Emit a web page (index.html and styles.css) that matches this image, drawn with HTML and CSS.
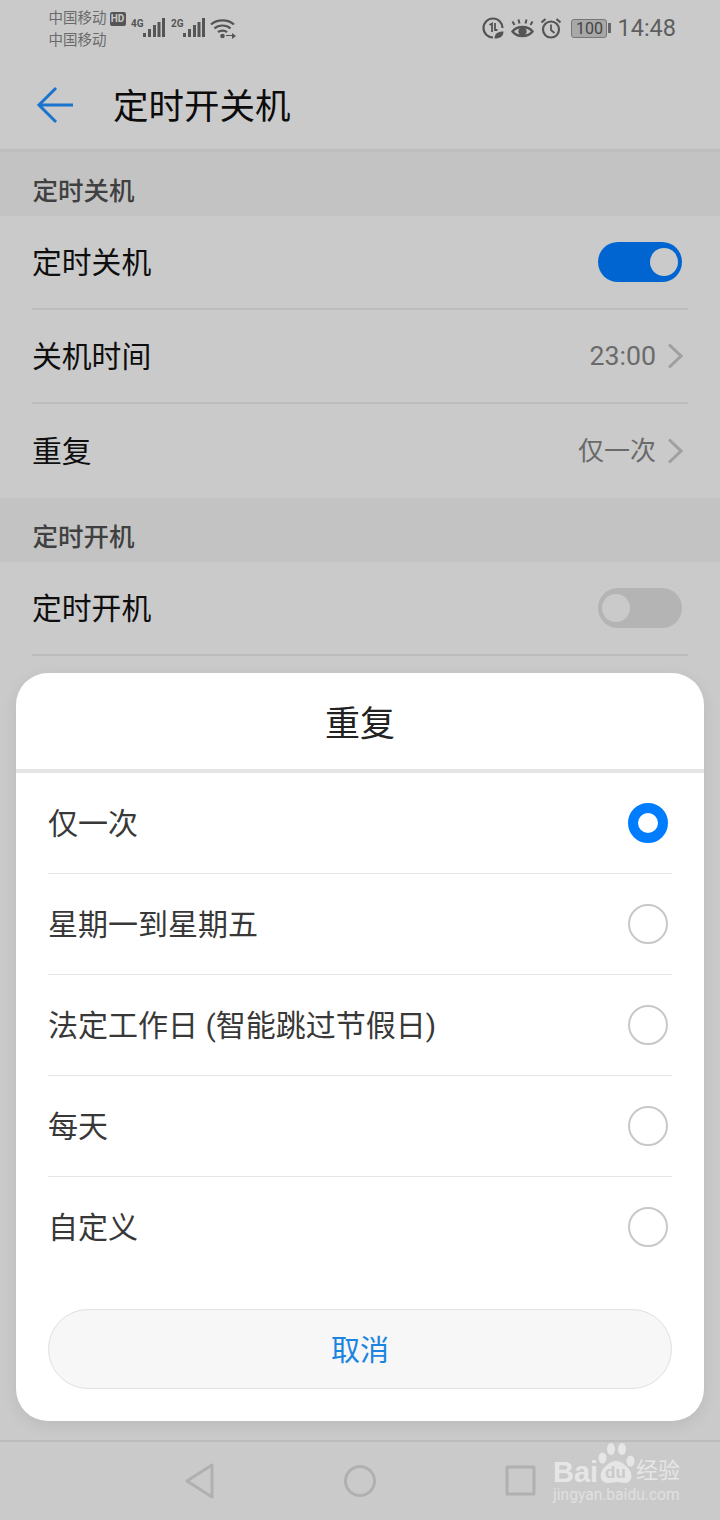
FILE: index.html
```html
<!DOCTYPE html>
<html lang="zh-CN">
<head>
    <meta charset="UTF-8">
    <meta name="viewport" content="width=device-width, initial-scale=1.0">
    <title>定时开关机</title>
    <link rel="stylesheet" href="styles.css">
</head>
<body>
<div class="screen">
    <div class="status-bar">
        <div class="carriers">
            <div class="carrier-line">中国移动<span class="hd">HD</span></div>
            <div class="carrier-line">中国移动</div>
        </div>
        <div class="signal">
            <span class="net">4G</span>
            <svg width="22" height="20" viewBox="0 0 22 20"><g fill="#555"><rect x="0" y="15" width="3" height="4"/><rect x="5" y="11" width="3" height="8"/><rect x="10" y="7" width="3" height="12"/><rect x="14.500" y="4" width="3" height="15"/><rect x="19" y="0" width="3" height="19"/></g></svg>
        </div>
        <div class="signal">
            <span class="net">2G</span>
            <svg width="22" height="20" viewBox="0 0 22 20"><g fill="#555"><rect x="0" y="15" width="3" height="4"/><rect x="5" y="11" width="3" height="8"/><rect x="10" y="7" width="3" height="12"/><rect x="14.500" y="4" width="3" height="15"/><rect x="19" y="0" width="3" height="19"/></g></svg>
        </div>
        <svg class="wifi" width="26" height="21" viewBox="0 0 26 21" fill="none" stroke="#555" stroke-width="2.200">
            <path d="M1 6.500C7 1 18 1 24 6.500"/>
            <path d="M4.500 10.500C8.500 6.500 16.500 6.500 20.500 10.500"/>
            <path d="M8 14.200C10.500 12 14.500 12 17 14.200"/>
            <circle cx="12.500" cy="18" r="2.300" fill="#555" stroke="none"/>
            <path d="M16 17.500h6" stroke-width="1"/>
            <path d="M22 15l4 3-4 3z" fill="#555" stroke="none"/>
        </svg>
        <div class="status-right">
            <svg width="22" height="22" viewBox="0 0 22 22" fill="none" stroke="#555" stroke-width="2.200">
                <path d="M11 20.500A9.500 9.500 0 1 1 20.500 11"/>
                <path d="M7.500 8l2.500-1.500V15" stroke-width="1.800"/>
                <path d="M13 6v7h2.500" stroke-width="1.800"/>
                <path d="M12.500 21.500c0-4.500 3-7 9-7 0 4.500-3 7-9 7z" fill="#555" stroke="none"/>
            </svg>
            <svg width="23" height="21" viewBox="0 0 23 21" fill="none" stroke="#555" stroke-width="2.400">
                <path d="M1.500 13.500C6 7.500 17 7.500 21.500 13.500 17 19.500 6 19.500 1.500 13.500z"/>
                <circle cx="11.500" cy="13.500" r="4.200" fill="#555" stroke="none"/>
                <path d="M3.500 7L1.500 3.500M8.500 5.500L7.500 1.500M14.500 5.500L15.500 1.500M19.500 7L21.500 3.500" stroke-width="2"/>
            </svg>
            <svg class="alarm" width="22" height="22" viewBox="0 0 22 22" fill="none" stroke="#555" stroke-width="2.200">
                <circle cx="11" cy="12.500" r="8"/>
                <path d="M11 7.500v5.500l3.500 3" stroke-width="1.800"/>
                <path d="M1.500 5.500L5.500 2M20.500 5.500L16.500 2"/>
            </svg>
            <div class="battery">
                <div class="battery-body">100</div>
                <div class="battery-nub"></div>
            </div>
            <span class="clock">14:48</span>
        </div>
    </div>

    <div class="title-bar">
        <svg class="back" width="38" height="38" viewBox="0 0 38 38" fill="none" stroke="#1a73cc" stroke-width="3">
            <path d="M37 19H3"/>
            <path d="M20 2L3 19l17 17"/>
        </svg>
        <h1 class="page-title">定时开关机</h1>
    </div>

    <div class="content">
        <div class="section-head">定时关机</div>
        <div class="row">
            <span class="row-label">定时关机</span>
            <div class="switch switch-on"><div class="knob"></div></div>
        </div>
        <div class="row">
            <span class="row-label">关机时间</span>
            <span class="row-value">23:00</span>
            <svg class="chevron" width="16" height="26" viewBox="0 0 16 26" fill="none" stroke="#a0a0a0" stroke-width="3"><path d="M2 1.500L14 13 2 24.500"/></svg>
        </div>
        <div class="row row-last">
            <span class="row-label">重复</span>
            <span class="row-value row-value-cn">仅一次</span>
            <svg class="chevron" width="16" height="26" viewBox="0 0 16 26" fill="none" stroke="#a0a0a0" stroke-width="3"><path d="M2 1.500L14 13 2 24.500"/></svg>
        </div>
        <div class="section-head">定时开机</div>
        <div class="row">
            <span class="row-label">定时开机</span>
            <div class="switch"><div class="knob"></div></div>
        </div>
    </div>

    <div class="nav-bar">
        <svg width="32" height="36" viewBox="0 0 32 36" fill="none" stroke="#b0b0b0" stroke-width="3" stroke-linejoin="round"><path d="M28 2V34L3 18z"/></svg>
        <svg width="32" height="36" viewBox="0 0 32 36" fill="none" stroke="#b0b0b0" stroke-width="3"><circle cx="16" cy="18" r="14.500"/></svg>
        <svg width="32" height="36" viewBox="0 0 32 36" fill="none" stroke="#b0b0b0" stroke-width="3" stroke-linejoin="round"><rect x="3" y="4" width="27" height="27"/></svg>
    </div>

    <div class="sheet">
        <div class="sheet-title">重复</div>
        <div class="option"><span class="option-text">仅一次</span><div class="radio radio-on"></div></div>
        <div class="option"><span class="option-text">星期一到星期五</span><div class="radio"></div></div>
        <div class="option"><span class="option-text">法定工作日 (智能跳过节假日)</span><div class="radio"></div></div>
        <div class="option"><span class="option-text">每天</span><div class="radio"></div></div>
        <div class="option option-last"><span class="option-text">自定义</span><div class="radio"></div></div>
        <div class="cancel">取消</div>
    </div>

    <div class="watermark">
        <svg class="paw" width="40" height="44" viewBox="0 0 40 44" fill="#e6e6e6">
            <ellipse cx="5.500" cy="17" rx="4" ry="5.500"/>
            <ellipse cx="14" cy="8" rx="4" ry="6"/>
            <ellipse cx="25" cy="8" rx="4" ry="6"/>
            <ellipse cx="33.500" cy="20" rx="4" ry="5.500"/>
            <path d="M19 20c5 0 8 3 12 7 5 5 5 15-3 15-3 0-5-1-8-1s-6 1-9 1c-8 0-9-9-5-14 4-4 7-8 13-8z"/>
        </svg>
        <div class="wm-top">
            <span class="wm-bai">Bai</span>
            <span class="wm-du">du</span>
            <span class="wm-cn">经验</span>
        </div>
        <div class="wm-url">jingyan.baidu.com</div>
    </div>
</div>
</body>
</html>
```

FILE: styles.css
```css
* {
    box-sizing: border-box;
}
body {
    margin: 0;
    background-color: #cacaca;
    font-family: Roboto, "Noto Sans CJK SC", sans-serif;
}
.screen {
    position: relative;
    display: flex;
    flex-direction: column;
    width: 720px;
    height: 1520px;
    overflow: hidden;
    background-color: #cacaca;
}

/* status bar */
.status-bar {
    display: flex;
    align-items: flex-start;
    height: 70px;
    padding: 8px 44px 0 48.500px;
}
.carriers {
    width: 82.500px;
    color: #6a6a6a;
    font-size: 14.500px;
    line-height: 22px;
}
.carrier-line {
    display: flex;
    align-items: center;
    white-space: nowrap;
}
.hd {
    width: 16px;
    height: 14px;
    margin-left: 3px;
    border-radius: 2px;
    background-color: #555;
    color: #cacaca;
    font-size: 10px;
    font-weight: 700;
    line-height: 14px;
    text-align: center;
}
.signal {
    display: flex;
    align-items: flex-start;
    margin-top: 10px;
    margin-right: 6px;
}
.net {
    width: 12px;
    color: #555;
    font-size: 10px;
    font-weight: 700;
    line-height: 12px;
}
.wifi {
    margin-top: 10px;
    margin-left: -1px;
}
.status-right {
    display: flex;
    align-items: center;
    gap: 7px;
    margin-left: auto;
    height: 30px;
    margin-top: 5px;
}
.alarm {
    margin-left: -1px;
}
.battery {
    display: flex;
    align-items: center;
    margin-left: 2px;
}
.battery-body {
    width: 36px;
    height: 19px;
    border: 1px solid #777;
    border-radius: 3px;
    background-color: #a8a8a8;
    color: #444;
    font-size: 16px;
    line-height: 17px;
    text-align: center;
}
.battery-nub {
    width: 3px;
    height: 10px;
    margin-left: 1px;
    background-color: #666;
}
.clock {
    margin-left: -1px;
    color: #5e5e5e;
    font-size: 23.500px;
}

/* title bar */
.title-bar {
    display: flex;
    align-items: center;
    height: 82px;
    padding: 0 0 10px 36px;
    border-bottom: 3px solid #bdbdbd;
}
.back {
    margin-right: 39px;
}
.page-title {
    margin: 0;
    padding-bottom: 3px;
    color: #0c0c0c;
    font-size: 35.500px;
    font-weight: 400;
}

/* settings list */
.content {
    flex: 1;
}
.section-head {
    height: 64px;
    padding: 21px 32.500px 0;
    background-color: #c3c3c3;
    color: #404040;
    font-size: 25.500px;
    font-weight: 500;
    line-height: 36px;
}
.row {
    display: flex;
    align-items: center;
    height: 94px;
    margin-left: 32px;
    margin-right: 32px;
    border-bottom: 2px solid #bcbcbc;
}
.row-last {
    border-bottom: none;
}
.row-label {
    margin-right: auto;
    padding-bottom: 4px;
    color: #0e0e0e;
    font-size: 29.800px;
}
.row-value {
    color: #6a6a6a;
    font-size: 26.700px;
}
.row-value-cn {
    padding-bottom: 6px;
    font-size: 26px;
}
.chevron {
    margin-left: 11px;
    margin-right: 5px;
}
.switch {
    display: flex;
    align-items: center;
    width: 84px;
    height: 40px;
    margin-right: 6px;
    padding: 0 4px;
    border-radius: 20px;
    background-color: #b4b4b4;
}
.switch-on {
    justify-content: flex-end;
    background-color: #0065d0;
}
.knob {
    width: 28px;
    height: 28px;
    border-radius: 50%;
    background-color: #cacaca;
}

/* bottom nav */
.nav-bar {
    display: flex;
    justify-content: center;
    align-items: center;
    gap: 128px;
    height: 80px;
    border-top: 2px solid #bcbcbc;
}

/* dialog sheet */
.sheet {
    position: absolute;
    left: 16px;
    top: 673px;
    width: 688px;
    height: 748px;
    padding: 0 32px;
    border-radius: 32px;
    background-color: #fff;
    box-shadow: 0 4px 16px rgba(0, 0, 0, 0.08);
}
.sheet-title {
    height: 100px;
    margin: 0 -32px;
    border-bottom: 4px solid #e4e4e4;
    color: #222;
    font-size: 35px;
    line-height: 104px;
    text-align: center;
}
.option {
    display: flex;
    justify-content: space-between;
    align-items: center;
    height: 101px;
    padding-right: 4px;
    border-bottom: 1px solid #e6e6e6;
    color: #383838;
    font-size: 30px;
}
.option-text {
    padding-bottom: 4px;
}
.option-last {
    height: 100px;
    border-bottom: none;
}
.radio {
    width: 40px;
    height: 40px;
    border: 2px solid #c8c8c8;
    border-radius: 50%;
}
.radio-on {
    border: 10px solid #007dff;
}
.cancel {
    height: 80px;
    margin-top: 32px;
    border: 1px solid #e0e0e0;
    border-radius: 40px;
    background-color: #f7f7f7;
    color: #1a84e0;
    font-size: 29px;
    line-height: 82px;
    text-align: center;
}

/* baidu watermark */
.watermark {
    position: absolute;
    left: 553px;
    top: 1441px;
    width: 130px;
    height: 64px;
}
.paw {
    position: absolute;
    left: 44px;
    top: 0;
}
.wm-top {
    position: absolute;
    left: 0;
    top: 16px;
    width: 130px;
    height: 28px;
    color: #e6e6e6;
}
.wm-bai {
    position: absolute;
    left: 0;
    top: 1px;
    font-family: "Liberation Sans", sans-serif;
    font-size: 29px;
    font-weight: 700;
    line-height: 28px;
}
.wm-du {
    position: absolute;
    left: 52px;
    top: 6px;
    color: #cacaca;
    font-family: "Liberation Sans", sans-serif;
    font-size: 17px;
    font-weight: 700;
    line-height: 20px;
}
.wm-cn {
    position: absolute;
    left: 83px;
    top: 0;
    font-size: 22px;
    line-height: 28px;
}
.wm-url {
    position: absolute;
    left: 0;
    top: 44px;
    color: #e0e0e0;
    font-size: 15.600px;
    line-height: 20px;
    white-space: nowrap;
}
```
